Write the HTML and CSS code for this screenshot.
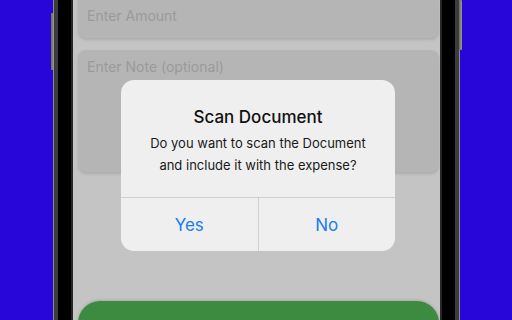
FILE: index.html
```html
<!DOCTYPE html>
<html lang="en">
<head>
  <meta charset="UTF-8">
  <meta name="viewport" content="width=device-width, initial-scale=1.0">
  <title>Scan Document</title>
  <link rel="stylesheet" href="styles.css">
</head>
<body>

  <div class="phone">
    <!-- side buttons -->
    <span class="side-btn left"></span>
    <span class="side-btn right"></span>

    <div class="screen">
      <div class="field amount">Enter Amount</div>
      <div class="field note">Enter Note (optional)</div>
      <div class="save-btn"></div>

      <!-- Alert dialog -->
      <div class="alert">
        <div class="alert-body">
          <h2>Scan Document</h2>
          <p>Do you want to scan the Document<br>and include it with the expense?</p>
        </div>
        <div class="alert-actions">
          <button>Yes</button>
          <button>No</button>
        </div>
      </div>
    </div>
  </div>

</body>
</html>
```

FILE: styles.css
```css
/* Base styling */
* {
  margin: 0;
  padding: 0;
  box-sizing: border-box;
  font-family: 'Inter', 'Roboto', sans-serif;
}

body {
  background-color: #2805d8;
  width: 512px;
  height: 320px;
  overflow: hidden;
  display: flex;
  justify-content: center;
}

/* Phone frame */
.phone {
  position: relative;
  width: 405px;
  height: 320px;
  background-color: #000;
  border-left: 4px solid #3c3c3a;
  border-right: 4px solid #3c3c3a;
  box-shadow: 0 0 0 1px #8a8a86;
  padding: 0 13px;
  margin-left: 1px;
}

.side-btn {
  position: absolute;
  width: 3px;
  background: linear-gradient(to right, #6b6b5e, #9a9a8a);
  border-radius: 1px;
}

.side-btn.left {
  left: -7px;
  top: 13px;
  height: 57px;
}

.side-btn.right {
  right: -7px;
  top: 0;
  height: 50px;
}

/* Screen */
.screen {
  position: relative;
  height: 100%;
  background-color: #c4c4c4;
  border-left: 2px solid #262626;
  border-right: 2px solid #262626;
  padding: 0 1px 0 5px;
  display: flex;
  flex-direction: column;
  overflow: hidden;
}

.field {
  flex-shrink: 0;
  background-color: #b5b5b5;
  border-radius: 8px;
  box-shadow: 0 2px 3px rgba(0, 0, 0, 0.12);
  color: #9a9a9a;
  font-size: 14px;
  padding: 0 9px;
}

.field.amount {
  margin-top: -8px;
  height: 46px;
  padding-top: 15px;
}

.field.note {
  margin-top: 12px;
  height: 122px;
  padding-top: 8px;
}

.save-btn {
  flex-shrink: 0;
  margin-top: 129px;
  height: 50px;
  background-color: #3d8b40;
  border-radius: 22px;
  box-shadow: 0 -1px 3px rgba(0, 0, 0, 0.15);
}

/* Alert */
.alert {
  position: absolute;
  left: 48px;
  top: 80px;
  width: 274px;
  height: 171px;
  background-color: #efefef;
  border-radius: 13px;
  display: flex;
  flex-direction: column;
  overflow: hidden;
}

.alert-body {
  height: 118px;
  padding-top: 26px;
  text-align: center;
  border-bottom: 1px solid #cfcfcf;
  color: #111;
}

.alert-body h2 {
  font-size: 17px;
  font-weight: 500;
  line-height: 22px;
  margin-bottom: 4px;
}

.alert-body p {
  font-size: 13px;
  line-height: 22px;
  color: #1a1a1a;
}

.alert-actions {
  flex: 1;
  display: flex;
}

.alert-actions button {
  flex: 1;
  border: none;
  background: none;
  color: #1a7cf4;
  font-size: 17px;
  font-family: 'Inter', 'Roboto', sans-serif;
}

.alert-actions button + button {
  border-left: 1px solid #cfcfcf;
}
```
